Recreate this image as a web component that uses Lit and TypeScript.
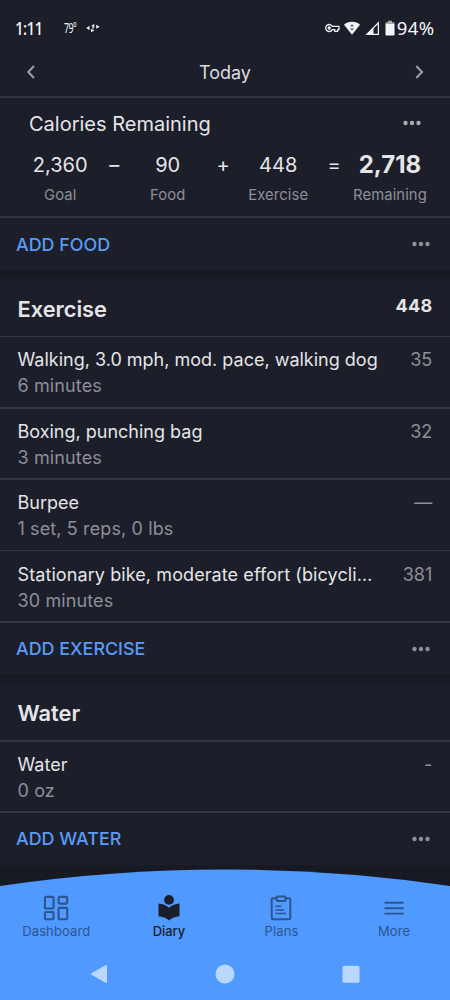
import { LitElement, html, css, svg } from "lit";
import { customElement } from "lit/decorators.js";

interface Entry { name: string; detail: string; value: string; clipped?: boolean; }

const exercises: Entry[] = [
  { name: "Walking, 3.0 mph, mod. pace, walking dog", detail: "6 minutes", value: "35" },
  { name: "Boxing, punching bag", detail: "3 minutes", value: "32" },
  { name: "Burpee", detail: "1 set, 5 reps, 0 lbs", value: "—" },
  { name: "Stationary bike, moderate effort (bicycli…", detail: "30 minutes", value: "381", clipped: true },
];
const water: Entry[] = [{ name: "Water", detail: "0 oz", value: "-" }];

const dots = html`<svg class="dots" width="20" height="6" viewBox="0 0 20 6" fill="currentColor">
  <circle cx="3.5" cy="3" r="2.2"/><circle cx="10" cy="3" r="2.2"/><circle cx="16.5" cy="3" r="2.2"/></svg>`;

const tabs = [
  { label: "Dashboard", active: false, icon: svg`<g fill="none" stroke="currentColor" stroke-width="2.1">
      <rect x="2.9" y="2.9" width="8.6" height="11.6" rx="1"/><rect x="16.6" y="2.9" width="8.6" height="6.7" rx="1"/>
      <rect x="2.9" y="18" width="8.6" height="7.2" rx="1"/><rect x="16.6" y="13.9" width="8.6" height="11.3" rx="1"/></g>` },
  { label: "Diary", active: true, icon: svg`<g fill="currentColor"><circle cx="14" cy="5.9" r="4.9"/>
      <path d="M14 13.7C11.200 11.300 7.500 9.800 3.500 9.500v12.700c4 .3 7.700 1.800 10.500 4.300 2.800-2.500 6.500-4 10.500-4.300V9.500c-4 .3-7.700 1.800-10.500 4.200z"/></g>` },
  { label: "Plans", active: false, icon: svg`<g fill="none" stroke="currentColor" stroke-width="2">
      <path d="M9.500 4.200H6a1.300 1.300 0 0 0-1.300 1.300v18.500A1.300 1.300 0 0 0 6 25.300h16a1.300 1.300 0 0 0 1.300-1.300V5.500A1.300 1.300 0 0 0 22 4.200h-3.500"/>
      <rect x="9.700" y="2.500" width="8.800" height="4.600" rx=".8"/><path stroke-width="1.500" d="M8.500 12.300h5.700M8.500 15.900h8.500M8.500 19.500h10.500"/></g>` },
  { label: "More", active: false, icon: svg`<path stroke="currentColor" stroke-width="1.900" d="M4.500 8.800h19.200M4.500 14.200h19.200M4.500 19.600h19.200"/>` },
];

@customElement("app-root")
export class AppRoot extends LitElement {
  static styles = css`
    :host {
      display: flex; flex-direction: column; width: 450px; height: 1000px; overflow: hidden;
      background: #171923; color: #e5e5e7; font-family: Inter, "Liberation Sans", sans-serif;
    }
    * { box-sizing: border-box; }
    svg { display: block; flex: none; }
    .panel { background: #1c1e2a; flex: none; }
    .status {
      height: 48px; padding: 8px 15.5px 0 15px; display: flex; align-items: center;
      font: 18px/24px "Noto Sans", sans-serif; color: #f4f4f6;
    }
    .clock { width: 49px; font-weight: 500; letter-spacing: -0.9px; font-size: 18.5px; transform: scaleX(0.83); transform-origin: 0 50%; }
    .temp { width: 22px; font-size: 14px; line-height: 22px; letter-spacing: -0.8px; transform: scaleX(0.63); transform-origin: 0 50%; }
    .right { margin-left: auto; display: flex; align-items: center; }
    .wifi { margin-left: 3px; }
    .signal { margin-left: 4px; }
    .cell { margin: 0 2px 0 5px; }
    .battery { font-size: 18.5px; letter-spacing: 0.4px; }
    .date {
      height: 48px; display: flex; align-items: center; justify-content: space-between;
      padding: 0 24px; font-size: 18px; color: #dcdce0;
    }
    .chev { color: #9c9da6; }
    .line { height: 1.5px; background: #343641; }
    .thick { height: 2px; background: #31333e; }
    .summary { height: 118.3px; padding: 12.5px 23px 0 29px; }
    .top { display: flex; align-items: center; justify-content: space-between; height: 26px; font-size: 20px; }
    .dots { color: #8f9098; }
    .top .dots { margin: 0 5px 2px 0; color: #aaabb2; }
    .equation { display: grid; grid-template-columns: 77px 31px 76px 35px 75px 37px 74.5px; margin: 13px 0 0 -7.3px; text-align: center; justify-content: start; }
    .num { font-size: 20px; line-height: 30px; height: 30px; }
    .total { font-size: 24px; font-weight: 700; }
    .cap { font-size: 14.8px; line-height: 31px; color: #8e8f98; letter-spacing: 0.1px; white-space: nowrap; }
    .add { height: 51.7px; display: flex; align-items: center; justify-content: space-between; padding: 0 19.5px 0 16px; color: #5a9bf5; font-size: 17.9px; font-weight: 500; }
    .gap { height: 9px; flex: none; }
    .section { height: 56.8px; display: flex; justify-content: space-between; padding: 0 17.5px; }
    .title { font-size: 21.8px; font-weight: 600; line-height: 60px; }
    .sum { font-size: 18px; font-weight: 700; line-height: 54px; letter-spacing: 0.3px; }
    .row { height: 69.85px; padding: 10.2px 17.7px 0 17.5px; display: flex; justify-content: space-between; font-size: 18px; line-height: 26px; white-space: nowrap; }
    .muted { color: #8e8f98; }
    .detail { letter-spacing: 0.12px; }
    .clipped { letter-spacing: 0.09px; }
    .nav { margin-top: auto; height: 131px; flex: none; position: relative; color: #2d568f; }
    .curve { position: absolute; inset: 0; }
    .tabs { position: relative; display: grid; grid-template-columns: repeat(4, 112.6px); padding-top: 25px; }
    .tab { display: flex; flex-direction: column; align-items: center; font-size: 13px; line-height: 18px; letter-spacing: 0.12px; }
    .active { color: #1b1e2b; font-weight: 500; letter-spacing: -0.1px; }
    .system { position: relative; display: flex; justify-content: center; gap: 106px; margin-top: 24px; }
  `;

  private line() { return html`<div class="line"></div>`; }

  private rows(entries: Entry[]) {
    return entries.map((e) => html`${this.line()}
      <div class="row">
        <div><div class="${e.clipped ? "clipped" : ""}">${e.name}</div><div class="muted detail">${e.detail}</div></div>
        <div class="muted">${e.value}</div>
      </div>`);
  }

  private add(label: string) {
    return html`<div class="add"><span>${label}</span>${dots}</div>`;
  }

  render() {
    return html`
      <div class="panel">
        <div class="status">
          <span class="clock">1:11</span><span class="temp">79°</span>
          <svg width="14" height="10" viewBox="0 0 14 10" fill="currentColor">
            <path d="M.3 5l3.200-2.200v4.400zM13.700 3.700l-3.500-2v4zM8.300.8v3.800L5.200 3zM5 9.200l3.500-1.700L5 5.700zM6 4.500h2v1H6z"/></svg>
          <div class="right">
            <svg width="15" height="10" viewBox="0 0 15 10" fill="none" stroke="currentColor" stroke-width="1.300">
              <path d="M7.300 3.400A3.500 3.500 0 1 0 7.300 6.600h2.400v1.700h3V6.600h1.300V3.400z" stroke-linejoin="round"/><circle cx="4.200" cy="5" r="1" fill="currentColor"/></svg>
            <svg class="wifi" width="18" height="15" viewBox="0 0 18 15"><path fill="currentColor" d="M1 3.700C5.500-.1 12.500-.1 17 3.700L9 13.800z"/>
              <path fill="#6d6e77" d="M9 2.800l2 2.700H7zM9 10L7 7.300h4z"/></svg>
            <svg class="signal" width="15" height="15" viewBox="0 0 15 15"><path fill="none" stroke="currentColor" stroke-width="1.200" d="M1.800 13.400L13.400 1.800v11.600z"/><path fill="currentColor" d="M1 14l7.500-7.500V14z"/></svg>
            <svg class="cell" width="10" height="16" viewBox="0 0 10 16"><path fill="currentColor" d="M.5 4h9v10.700a.8.8 0 0 1-.8.8H1.300a.8.800 0 0 1-.8-.8z"/><path fill="#aaa" d="M3 .8h4v1.400h1.700a.8.8 0 0 1 .8.8v1h-9V3a.8.8 0 0 1 .8-.8H3z"/></svg>
            <span class="battery">94%</span>
          </div>
        </div>
        <div class="date">
          <svg class="chev" width="14" height="14" viewBox="0 0 14 14" fill="none" stroke="currentColor" stroke-width="2.100"><path d="M10 1L4.300 7l5.700 6"/></svg>
          <span>Today</span>
          <svg class="chev" width="14" height="14" viewBox="0 0 14 14" fill="none" stroke="currentColor" stroke-width="2.100"><path d="M4.300 1L10 7l-5.700 6"/></svg>
        </div>
        <div class="thick"></div>
        <div class="summary">
          <div class="top"><span>Calories Remaining</span>${dots}</div>
          <div class="equation">
            <span class="num">2,360</span><span class="num">–</span><span class="num">90</span><span class="num">+</span>
            <span class="num">448</span><span class="num">=</span><span class="num total">2,718</span>
            <span class="cap">Goal</span><span></span><span class="cap">Food</span><span></span>
            <span class="cap">Exercise</span><span></span><span class="cap">Remaining</span>
          </div>
        </div>
        <div class="thick"></div>
        ${this.add("ADD FOOD")}
      </div>
      <div class="gap"></div>
      <div class="panel">
        <div class="section"><span class="title">Exercise</span><span class="sum">448</span></div>
        ${this.rows(exercises)}${this.line()}${this.add("ADD EXERCISE")}
      </div>
      <div class="gap"></div>
      <div class="panel">
        <div class="section"><span class="title">Water</span></div>
        ${this.rows(water)}${this.line()}${this.add("ADD WATER")}
      </div>
      <div class="nav">
        <svg class="curve" width="450" height="131" viewBox="0 0 450 131"><path fill="#4f99ff" d="M0 17Q225-16 450 17V131H0z"/></svg>
        <div class="tabs">
          ${tabs.map((t) => html`<div class="tab ${t.active ? "active" : ""}">
            <svg width="28" height="28" viewBox="0 0 28 28">${t.icon}</svg><span>${t.label}</span></div>`)}
        </div>
        <div class="system">
          <svg width="20" height="20" viewBox="0 0 20 20"><path fill="#b9d7ff" stroke="#b9d7ff" stroke-width="2" stroke-linejoin="round" d="M3 10L17 2v16z"/></svg>
          <svg width="20" height="20" viewBox="0 0 20 20"><circle cx="10" cy="10" r="9.500" fill="#b9d7ff"/></svg>
          <svg width="20" height="20" viewBox="0 0 20 20"><rect x="1.500" y="1.700" width="17" height="17" rx="1.500" fill="#b9d7ff"/></svg>
        </div>
      </div>`;
  }
}
